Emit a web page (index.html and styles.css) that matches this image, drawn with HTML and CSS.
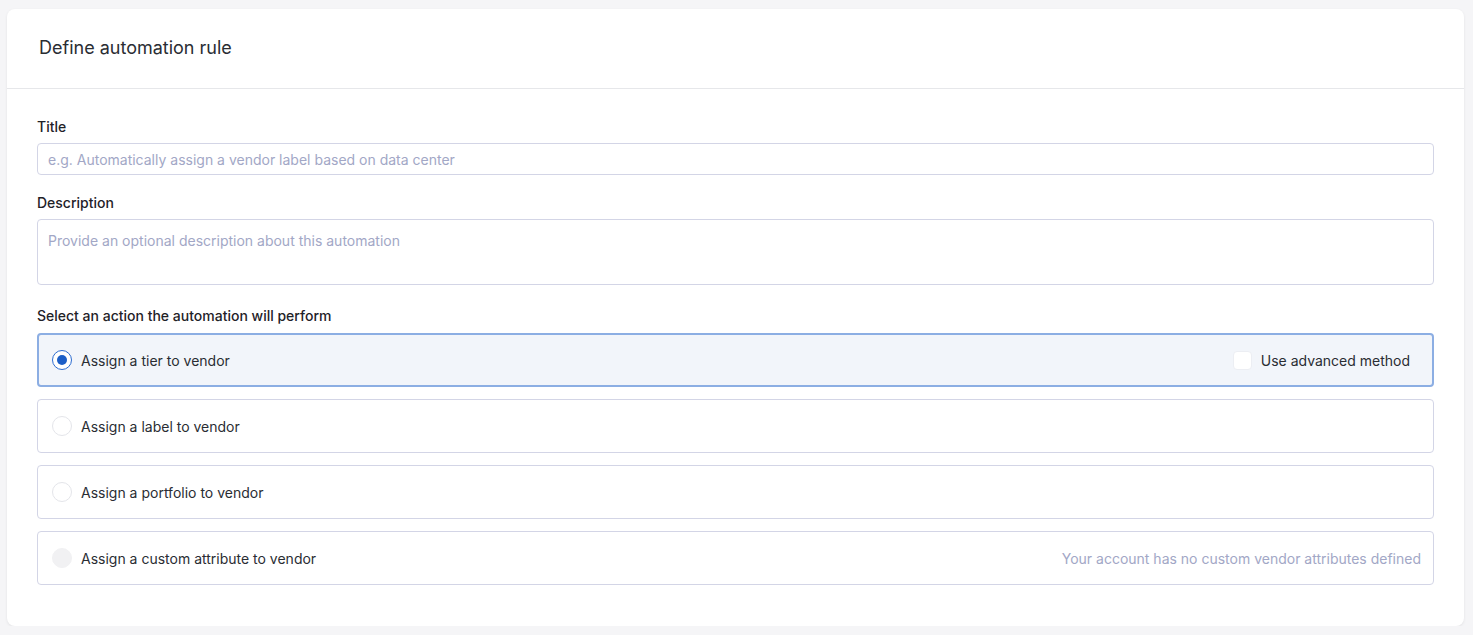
FILE: index.html
```html
<!DOCTYPE html>
<html lang="en">
<head>
  <meta charset="UTF-8" />
  <title>Define automation rule</title>
  <link rel="stylesheet" href="styles.css">
</head>
<body>
  <div class="rule-card">
    <div class="rule-header">
      <h2>Define automation rule</h2>
    </div>

    <div class="rule-body">
      <label class="field-label" for="title">Title</label>
      <input type="text" id="title" class="text-input" placeholder="e.g. Automatically assign a vendor label based on data center" />

      <label class="field-label" for="desc">Description</label>
      <textarea id="desc" class="text-area" placeholder="Provide an optional description about this automation"></textarea>

      <div class="field-label section-label">Select an action the automation will perform</div>

      <div class="options">
        <div class="option selected">
          <span class="radio checked"></span>
          <span class="option-text">Assign a tier to vendor</span>
          <span class="option-right">
            <span class="checkbox"></span>
            Use advanced method
          </span>
        </div>
        <div class="option">
          <span class="radio"></span>
          <span class="option-text">Assign a label to vendor</span>
        </div>
        <div class="option">
          <span class="radio"></span>
          <span class="option-text">Assign a portfolio to vendor</span>
        </div>
        <div class="option">
          <span class="radio disabled"></span>
          <span class="option-text">Assign a custom attribute to vendor</span>
          <span class="option-right muted">Your account has no custom vendor attributes defined</span>
        </div>
      </div>
    </div>
  </div>
</body>
</html>
```

FILE: styles.css
```css
body {
  font-family: Inter, 'Noto Sans', sans-serif;
  background: #f5f5f7;
  margin: 0;
  padding: 9px 9px 0 7px;
  color: #24272e;
}

.rule-card {
  background: #fff;
  border-radius: 8px;
  box-shadow: 0 1px 3px rgba(0, 0, 0, 0.08);
}

.rule-header {
  box-sizing: border-box;
  height: 80px;
  border-bottom: 1px solid #e6e7ea;
  display: flex;
  align-items: center;
  padding: 0 0 3px 32px;
}

.rule-header h2 {
  margin: 0;
  font-size: 18px;
  font-weight: 400;
  color: #2a2d33;
}

.rule-body {
  padding: 29px 30px 41px 30px;
}

.field-label {
  display: block;
  font-size: 14px;
  line-height: 18px;
  font-weight: 500;
  color: #1f2228;
  margin-bottom: 7px;
}

.text-input,
.text-area {
  display: block;
  box-sizing: border-box;
  width: 100%;
  font-family: inherit;
  font-size: 14px;
  border: 1px solid #d3d5e6;
  border-radius: 4px;
  padding: 0 10px;
  color: #24272e;
  outline: none;
}

.text-input {
  height: 32px;
  margin-bottom: 19px;
}

.text-area {
  height: 66px;
  padding-top: 12px;
  resize: none;
  margin-bottom: 22px;
}

.text-input::placeholder,
.text-area::placeholder {
  color: #a2a7c6;
}

.section-label {
  margin-bottom: 8px;
}

.options {
  display: flex;
  flex-direction: column;
  gap: 12px;
}

.option {
  box-sizing: border-box;
  height: 54px;
  border: 1px solid #d3d5e6;
  border-radius: 4px;
  display: flex;
  align-items: center;
  padding: 0 12px 0 14px;
  font-size: 14px;
}

.option.selected {
  background: #f2f5fa;
  border: 2px solid #8caee3;
  padding: 0 22px 0 13px;
}

.radio {
  box-sizing: border-box;
  width: 20px;
  height: 20px;
  border-radius: 50%;
  border: 1px solid #e4e5ea;
  background: #fff;
  margin-right: 9px;
  flex-shrink: 0;
}

.radio.checked {
  border: 1.5px solid #2d6cd0;
  display: flex;
  align-items: center;
  justify-content: center;
}

.radio.checked::after {
  content: "";
  width: 10px;
  height: 10px;
  border-radius: 50%;
  background: #1b5ec7;
}

.radio.disabled {
  background: #f1f1f3;
  border-color: #f1f1f3;
}

.option-text {
  flex: 1;
  color: #2a2d33;
}

.option-right {
  display: flex;
  align-items: center;
  gap: 9px;
  color: #2a2d33;
}

.option-right.muted {
  color: #a2a7c6;
}

.checkbox {
  box-sizing: border-box;
  width: 19px;
  height: 19px;
  border-radius: 4px;
  background: #fff;
  border: 1px solid #eceef3;
}
```
